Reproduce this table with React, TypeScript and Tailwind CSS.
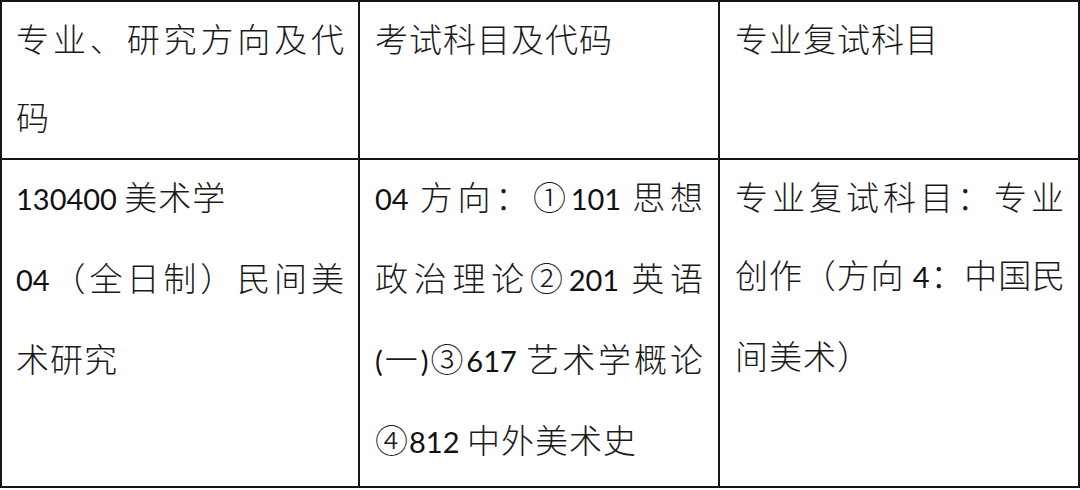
import React from "react";

const L = ({ children }: { children: React.ReactNode }) => (
  <span className="font-['Lato',sans-serif] text-[29px] tracking-normal font-normal text-[#111]">{children}</span>
);

const Line = ({ j, tight, children }: { j?: boolean; tight?: boolean; children: React.ReactNode }) => (
  <div
    className={`${j ? "text-justify [text-align-last:justify]" : "text-left"} ${tight ? "tracking-normal" : ""}`}
  >
    {children}
  </div>
);

const Body = ({ children }: { children: React.ReactNode }) => <div className="-mt-[3px]">{children}</div>;

const cell =
  "border-r-2 border-b-2 border-[#151515] leading-[78px] text-[33px] tracking-[1px] font-light text-[#1a1a1a] font-['Noto_Sans_CJK_SC',sans-serif] overflow-hidden";

export default function App() {
  return (
    <div className="w-[1080px] h-[490px] bg-white overflow-hidden">
      <div className="grid grid-cols-[360px_360px_360px] grid-rows-[160px_328px]">
        <div className={`${cell} border-t-2 border-l-2 pl-[14px] pr-[13px]`}>
          <Body>
            <Line j>专业、研究方向及代</Line>
            <Line>码</Line>
          </Body>
        </div>
        <div className={`${cell} border-t-2 pl-[15px] pr-[14px]`}>
          <Body>
            <Line>考试科目及代码</Line>
          </Body>
        </div>
        <div className={`${cell} border-t-2 pl-[15px] pr-[14px]`}>
          <Body>
            <Line>专业复试科目</Line>
          </Body>
        </div>

        <div className={`${cell} border-l-2 pl-[14px] pr-[13px]`}>
          <Body>
            <Line>
              <L>130400 </L>美术学
            </Line>
            <Line j>
              <L>04</L>（全日制）民间美
            </Line>
            <Line>术研究</Line>
          </Body>
        </div>
        <div className={`${cell} pl-[15px] pr-[14px]`}>
          <Body>
            <Line j>
              <L>04 </L>方向：①<L>101 </L>思想
            </Line>
            <Line j>
              政治理论②<L>201 </L>英语
            </Line>
            <Line j>
              <L>(</L>一<L>)</L>③<L>617 </L>艺术学概论
            </Line>
            <Line>
              ④<L>812 </L>中外美术史
            </Line>
          </Body>
        </div>
        <div className={`${cell} pl-[15px] pr-[13px]`}>
          <Body>
            <Line j>专业复试科目：专业</Line>
            <Line j tight>
              创作（方向<L> 4</L>：中国民
            </Line>
            <Line>间美术）</Line>
          </Body>
        </div>
      </div>
    </div>
  );
}
